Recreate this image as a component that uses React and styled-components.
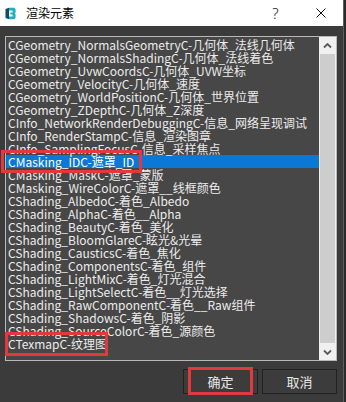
import React from "react";
import styled, { createGlobalStyle } from "styled-components";

const GlobalStyle = createGlobalStyle`
  html, body {
    margin: 0;
    padding: 0;
    background: #2b2b2b;
  }
  body {
    font-family: "Noto Sans CJK SC", "Noto Sans", sans-serif;
  }
`;

const Screen = styled.div`
  position: relative;
  display: flex;
  width: 346px;
  height: 402px;
  overflow: hidden;
`;

const Window = styled.div`
  width: 344px;
  height: 402px;
  box-sizing: border-box;
  display: flex;
  flex-direction: column;
  background: #3b3b3b;
  border-right: 1px solid #5e5e5e;
`;

const TitleBar = styled.div`
  height: 26px;
  flex-shrink: 0;
  display: flex;
  align-items: center;
  padding-left: 5px;
  background: #ffffff;
`;

const AppIcon = styled.svg`
  width: 11px;
  height: 13px;
  margin-right: 10px;
`;

const Title = styled.span`
  flex: 1;
  font-size: 12px;
  line-height: 1;
  color: #000;
`;

const CaptionButton = styled.div`
  width: 45px;
  height: 26px;
  display: flex;
  align-items: center;
  justify-content: center;
  font-family: "Noto Sans", sans-serif;
  font-size: 15px;
  font-weight: 300;
  color: #1a1a1a;
`;

const Body = styled.div`
  flex: 1;
  display: flex;
  flex-direction: column;
  padding: 10px 6px 0 5px;
`;

const ListBox = styled.div`
  height: 325px;
  box-sizing: border-box;
  display: flex;
  background: #474747;
  border: 1px solid #b8b8b8;
`;

const Items = styled.div`
  flex: 1;
  padding-top: 1px;
  overflow: hidden;
`;

const Row = styled.div`
  height: 13px;
  line-height: 13px;
  padding-left: 2px;
  font-size: 12px;
  white-space: nowrap;
  color: ${(p) => (p.$selected ? "#ffffff" : "#ececec")};
  background: ${(p) => (p.$selected ? "#0a78d4" : "transparent")};
`;

const ScrollBar = styled.div`
  width: 17px;
  display: flex;
  flex-direction: column;
  background: #f0f0f0;
`;

const ArrowButton = styled.div`
  height: 17px;
  display: flex;
  align-items: center;
  justify-content: center;
`;

const Track = styled.div`
  flex: 1;
  display: flex;
  padding: 0 1px;
`;

const Thumb = styled.div`
  flex: 1;
  background: #cdcdcd;
`;

const Footer = styled.div`
  display: flex;
  justify-content: flex-end;
  gap: 4px;
  margin-top: 8px;
`;

const Button = styled.div`
  width: 75px;
  height: 25px;
  box-sizing: border-box;
  display: flex;
  align-items: center;
  justify-content: center;
  background: #3c3c3c;
  border: 1px solid #222222;
  color: #e8e8e8;
  font-size: 13px;
`;

const Mark = styled.div`
  position: absolute;
  left: ${(p) => p.$x}px;
  top: ${(p) => p.$y}px;
  width: ${(p) => p.$w}px;
  height: ${(p) => p.$h}px;
  box-sizing: border-box;
  border: 3px solid #e2383e;
  pointer-events: none;
`;

const items = [
  "CGeometry_NormalsGeometryC-几何体_法线几何体",
  "CGeometry_NormalsShadingC-几何体_法线着色",
  "CGeometry_UvwCoordsC-几何体_UVW坐标",
  "CGeometry_VelocityC-几何体_速度",
  "CGeometry_WorldPositionC-几何体_世界位置",
  "CGeometry_ZDepthC-几何体_Z深度",
  "CInfo_NetworkRenderDebuggingC-信息_网络呈现调试",
  "CInfo_RenderStampC-信息_渲染图章",
  "CInfo_SamplingFocusC-信息_采样焦点",
  "CMasking_IDC-遮罩_ID",
  "CMasking_MaskC-遮罩_蒙版",
  "CMasking_WireColorC-遮罩__线框颜色",
  "CShading_AlbedoC-着色_Albedo",
  "CShading_AlphaC-着色__Alpha",
  "CShading_BeautyC-着色_美化",
  "CShading_BloomGlareC-眩光&光晕",
  "CShading_CausticsC-着色_焦化",
  "CShading_ComponentsC-着色_组件",
  "CShading_LightMixC-着色_灯光混合",
  "CShading_LightSelectC-着色__灯光选择",
  "CShading_RawComponentC-着色__Raw组件",
  "CShading_ShadowsC-着色_阴影",
  "CShading_SourceColorC-着色_源颜色",
  "CTexmapC-纹理图",
];

function Chevron({ down }) {
  return (
    <svg width="9" height="6" viewBox="0 0 9 6">
      <path
        d={down ? "M1 1.5 L4.5 5 L8 1.5" : "M1 4.5 L4.5 1 L8 4.5"}
        fill="none"
        stroke="#5a5a5a"
        strokeWidth="1.8"
      />
    </svg>
  );
}

function App() {
  return (
    <Screen>
      <GlobalStyle />
      <Window>
        <TitleBar>
          <AppIcon viewBox="0 0 11 13">
            <path d="M0.5 2 L4 0.8 L4 12.2 L0.5 11 Z" fill="#0c4d6b" />
            <path
              d="M4 0.8 H9.5 L10.6 2.4 V5.4 L9.8 6.5 L10.6 7.6 V10.6 L9.5 12.2 H4 V9.6 H7.6 V7.6 H5.4 V5.4 H7.6 V3.4 H4 Z"
              fill="#1fb0bb"
            />
          </AppIcon>
          <Title>渲染元素</Title>
          <CaptionButton>?</CaptionButton>
          <CaptionButton>
            <svg width="10" height="10" viewBox="0 0 10 10">
              <path d="M0.5 0.5 L9.5 9.5 M9.5 0.5 L0.5 9.5" stroke="#111" strokeWidth="1" />
            </svg>
          </CaptionButton>
        </TitleBar>
        <Body>
          <ListBox>
            <Items>
              {items.map((name) => (
                <Row key={name} $selected={name === "CMasking_IDC-遮罩_ID"}>
                  {name}
                </Row>
              ))}
            </Items>
            <ScrollBar>
              <ArrowButton>
                <Chevron />
              </ArrowButton>
              <Track>
                <Thumb />
              </Track>
              <ArrowButton>
                <Chevron down />
              </ArrowButton>
            </ScrollBar>
          </ListBox>
          <Footer>
            <Button>确定</Button>
            <Button>取消</Button>
          </Footer>
        </Body>
      </Window>
      <Mark $x={1} $y={150} $w={141} $h={23} />
      <Mark $x={5} $y={332} $w={103} $h={24} />
      <Mark $x={188} $y={367} $w={65} $h={28} />
    </Screen>
  );
}

export default App;
